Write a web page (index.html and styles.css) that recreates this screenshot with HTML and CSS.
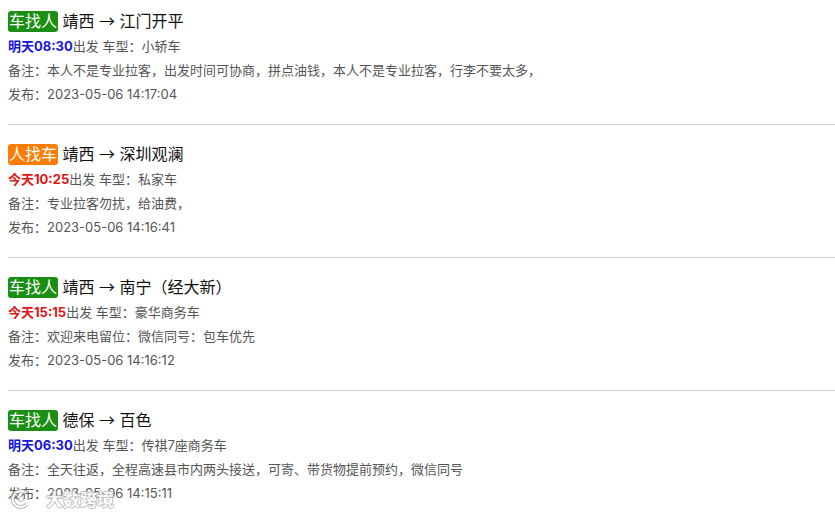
FILE: index.html
```html
<!DOCTYPE html>
<html lang="zh-CN">
<head>
  <meta charset="UTF-8">
  <meta name="viewport" content="width=device-width, initial-scale=1.0">
  <title>拼车信息</title>
  <link rel="stylesheet" href="styles.css">
</head>
<body>
  <div class="list">
    <div class="item">
      <div class="title"><span class="tag car">车找人</span> 靖西 <span class="arrow">→</span> 江门开平</div>
      <div class="line"><span class="time blue">明天08:30</span>出发 车型：小轿车</div>
      <div class="line">备注：本人不是专业拉客，出发时间可协商，拼点油钱，本人不是专业拉客，行李不要太多，</div>
      <div class="line">发布：2023-05-06 14:17:04</div>
    </div>
    <div class="item">
      <div class="title"><span class="tag person">人找车</span> 靖西 <span class="arrow">→</span> 深圳观澜</div>
      <div class="line"><span class="time red">今天10:25</span>出发 车型：私家车</div>
      <div class="line">备注：专业拉客勿扰，给油费，</div>
      <div class="line">发布：2023-05-06 14:16:41</div>
    </div>
    <div class="item">
      <div class="title"><span class="tag car">车找人</span> 靖西 <span class="arrow">→</span> 南宁（经大新）</div>
      <div class="line"><span class="time red">今天15:15</span>出发 车型：豪华商务车</div>
      <div class="line">备注：欢迎来电留位：微信同号：包车优先</div>
      <div class="line">发布：2023-05-06 14:16:12</div>
    </div>
    <div class="item">
      <div class="title"><span class="tag car">车找人</span> 德保 <span class="arrow">→</span> 百色</div>
      <div class="line"><span class="time blue">明天06:30</span>出发 车型：传祺7座商务车</div>
      <div class="line">备注：全天往返，全程高速县市内两头接送，可寄、带货物提前预约，微信同号</div>
      <div class="line">发布：2023-05-06 14:15:11</div>
    </div>
  </div>

  <div class="watermark">
    <svg width="22" height="20" viewBox="0 0 22 20">
      <path d="M16 4 A8 8 0 1 0 17 15" fill="none" stroke="#aaa" stroke-width="4"/>
      <path d="M16 4 A8 8 0 1 0 17 15" fill="none" stroke="#fff" stroke-width="2"/>
      <circle cx="11" cy="10" r="2.5" fill="#fff" stroke="#aaa"/>
    </svg>
    <span>大数跨境</span>
  </div>
</body>
</html>
```

FILE: styles.css
```css
body {
  margin: 8px 0 0 8px;
  font-family: Inter, "Noto Sans CJK SC", sans-serif;
  color: #555;
  background: #fff;
}
.item {
  padding: 16px 0 18px;
  border-bottom: 1px solid #ccc;
}
.item:first-child {
  padding-top: 0;
}
.item:last-child {
  border-bottom: none;
}
.title {
  font-size: 16px;
  line-height: 24px;
  height: 24px;
  color: #111;
  margin-bottom: 2px;
  white-space: nowrap;
}
.arrow {
  font-family: "Noto Sans CJK SC", sans-serif;
}
.tag {
  display: inline-block;
  color: #fff;
  padding: 0 1px;
  border-radius: 3px;
  line-height: 21px;
}
.tag.car {
  background: #1a8f14;
}
.tag.person {
  background: #fb7d05;
}
.line {
  font-size: 13px;
  line-height: 24px;
  height: 24px;
  white-space: nowrap;
}
.time {
  font-weight: bold;
}
.blue {
  color: #1616d8;
}
.red {
  color: #e01515;
}
.watermark {
  position: absolute;
  left: 10px;
  top: 486px;
  display: flex;
  align-items: center;
  gap: 14px;
  opacity: 0.8;
}
.watermark span {
  font-family: "Noto Sans CJK SC", sans-serif;
  font-size: 17px;
  font-weight: bold;
  color: #fff;
  letter-spacing: 0;
  text-shadow: 1px 0 0 #aaa, -1px 0 0 #aaa, 0 1px 0 #aaa, 0 -1px 0 #aaa;
}
```
